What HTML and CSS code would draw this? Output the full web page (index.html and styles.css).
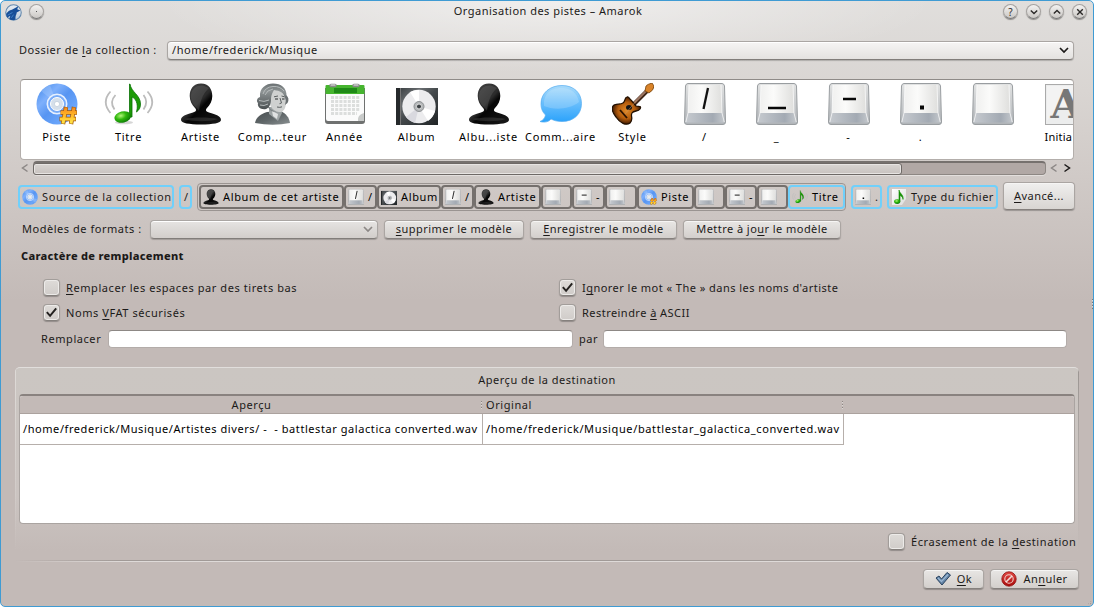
FILE: index.html
```html
<!DOCTYPE html>
<html lang="fr">
<head>
<meta charset="utf-8">
<title>Organisation des pistes – Amarok</title>
<link rel="stylesheet" href="styles.css">
</head>
<body>
<svg class="defs" width="0" height="0" aria-hidden="true">
  <defs>
    <linearGradient id="gDisc" x1="0" y1="0" x2="1" y2="1"><stop offset="0" stop-color="#3f86e8"/><stop offset=".3" stop-color="#7eb0fc"/><stop offset=".5" stop-color="#5795f2"/><stop offset=".75" stop-color="#6aa5fa"/><stop offset="1" stop-color="#4a88e6"/></linearGradient>
    <linearGradient id="gGold" x1="0" y1="0" x2="0" y2="1"><stop offset="0" stop-color="#f58a1c"/><stop offset=".5" stop-color="#ffb928"/><stop offset="1" stop-color="#ffe84a"/></linearGradient>
    <linearGradient id="gBlack" x1="0" y1="0" x2="1" y2="1"><stop offset="0" stop-color="#484848"/><stop offset=".45" stop-color="#2b2b2b"/><stop offset=".55" stop-color="#050505"/><stop offset="1" stop-color="#1a1a1a"/></linearGradient>
    <linearGradient id="gKeySide" x1="0" y1="0" x2="0" y2="1"><stop offset="0" stop-color="#e2e3e3"/><stop offset="1" stop-color="#b0b4b8"/></linearGradient>
    <linearGradient id="gKeyTop" x1="0" y1="0" x2="1" y2="0"><stop offset="0" stop-color="#f0f0ef"/><stop offset=".4" stop-color="#fbfbfa"/><stop offset="1" stop-color="#dfdfdd"/></linearGradient>
    <linearGradient id="gKeyFront" x1="0" y1="0" x2="1" y2="0"><stop offset="0" stop-color="#c6cacf"/><stop offset=".7" stop-color="#a3aab3"/><stop offset="1" stop-color="#c4c8cc"/></linearGradient>
    <linearGradient id="gBubble" x1="0" y1="0" x2="0" y2="1"><stop offset="0" stop-color="#a9dbfb"/><stop offset=".5" stop-color="#67bdfc"/><stop offset="1" stop-color="#2aa2fb"/></linearGradient>
    <radialGradient id="gNote" cx=".4" cy=".35" r=".7"><stop offset="0" stop-color="#b4f57c"/><stop offset=".45" stop-color="#2fb80c"/><stop offset="1" stop-color="#087404"/></radialGradient>
    <linearGradient id="gCase" x1="0" y1="0" x2="1" y2="1"><stop offset="0" stop-color="#33383b"/><stop offset=".3" stop-color="#696d70"/><stop offset=".5" stop-color="#44494c"/><stop offset="1" stop-color="#202426"/></linearGradient>
    <radialGradient id="gWood"><stop offset="0" stop-color="#e08a28"/><stop offset=".6" stop-color="#b45c0c"/><stop offset="1" stop-color="#3f1a02"/></radialGradient>
    <linearGradient id="gBust" x1="0" y1="0" x2="1" y2="1"><stop offset="0" stop-color="#484e50"/><stop offset=".5" stop-color="#5f6668"/><stop offset="1" stop-color="#8b9193"/></linearGradient>
    <linearGradient id="gWig" x1="0" y1="0" x2="0" y2="1"><stop offset="0" stop-color="#6a7072"/><stop offset=".3" stop-color="#8e9495"/><stop offset="1" stop-color="#4a5052"/></linearGradient>
    <linearGradient id="gPage" x1="0" y1="0" x2="1" y2="1"><stop offset="0" stop-color="#fff"/><stop offset="1" stop-color="#dcdcdc"/></linearGradient>
    <linearGradient id="gRed" x1="0" y1="0" x2="0" y2="1"><stop offset="0" stop-color="#e24a44"/><stop offset="1" stop-color="#a80c0c"/></linearGradient>
    <linearGradient id="gWolf" x1="0" y1="0" x2="0" y2="1"><stop offset="0" stop-color="#e9eef3"/><stop offset="1" stop-color="#b9cbdd"/></linearGradient>

    <symbol id="disc" viewBox="0 0 42 42">
      <circle cx="21" cy="21" r="20.5" fill="url(#gDisc)"/>
      <path d="M21 21 5 8A20.500 20.500 0 0 1 14 2Z" fill="#b8d6ff" opacity=".3"/>
      <path d="M21 21 40 27A20.500 20.500 0 0 1 34 37Z" fill="#b8d6ff" opacity=".3"/>
      <circle cx="21" cy="21" r="9.700" fill="#79acf8" stroke="#e6f0ff" stroke-width="1.600"/>
      <circle cx="21" cy="21" r="6.500" fill="#d5dfea" stroke="#fff"/>
      <circle cx="21" cy="21" r="2.600" fill="#fff" stroke="#b7c5d4" stroke-width=".6"/>
    </symbol>
    <symbol id="track" viewBox="0 0 42 42">
      <use href="#disc" width="42" height="42"/>
      <path d="M30 24 27 41M38 24 35 41M24.500 29.500H41M23.500 36H40" fill="none" stroke="#a75a08" stroke-width="4.400"/>
      <path d="M30 24.500 27 40.500M38 24.500 35 40.500M25 29.500H40.500M24 36H39.500" fill="none" stroke="url(#gGold)" stroke-width="3"/>
    </symbol>
    <symbol id="note" viewBox="0 0 50 42">
      <ellipse cx="20" cy="39.500" rx="9" ry="1.800" fill="#bbb" opacity=".6"/>
      <path d="M26 1C27 9 36.500 12 36.500 21C36.500 25 35 27 32.500 29C35 20 31 15 28 14V34H25.500V1Z" fill="#1c9a06" stroke="#087004" stroke-width=".8"/>
      <ellipse cx="18.800" cy="34" rx="8.500" ry="5.600" transform="rotate(-14 18.800 34)" fill="url(#gNote)"/>
      <g fill="none" stroke="#bcbcbc" stroke-width="1.800"><path d="M6.500 8.500Q-3 19 6.500 30"/><path d="M11.500 12Q5 19 10.500 26.500"/><path d="M43.500 8.500Q53 19 43.500 30"/><path d="M39.500 12Q45 19 39.500 26.500"/></g>
    </symbol>
    <symbol id="person" viewBox="0 0 42 42">
      <path d="M21 .5C29 .5 32.300 6.500 32.300 13C32.300 18 30 22 27 25C25 27 26 28.500 29 29.500C36 31.500 41 33 41 37C41 40 33 41.500 21 41.500S1 40 1 37C1 33 6 31.500 13 29.500C16 28.500 17 27 15 25C12 22 9.700 18 9.700 13C9.700 6.500 13 .5 21 .5Z" fill="url(#gBlack)"/>
      <path d="M11 12C12 5 17 2 23 2.500L29 5C22 11 20 20 19 28C17 24 10 21 11 12Z" fill="#777" opacity=".28"/>
      <path d="M4 36C14 34 28 34 38 36C30 39 12 39 4 36Z" fill="#777" opacity=".25"/>
    </symbol>
    <symbol id="composer" viewBox="0 0 42 42">
      <path d="M3 40C4 34 9 31 15 29L29 28C34 31 37 34 38 40Q21 43.500 3 40Z" fill="url(#gBust)"/>
      <path d="M17 24H29L30 30 26 38 17 31Z" fill="#9da3a4"/>
      <path d="M20 28 26 31 25 36 21 33Z" fill="#e0e2e2"/>
      <path d="M16 9C19 5 31 5 33 12L34 19C34 26 31 29.500 27 29C20 28 16 22 16 9Z" fill="#cfd1d0"/>
      <path d="M16 9V20Q17 28 26 29.500L19 28 14 22Z" fill="#7e8486"/>
      <path d="M14 26C9 27 5 24 6 20C4 18 5 15 8 14C7 5 14 .5 21 .5C29 .5 35 5 34.500 13L33 16C32 9 28 8 22 7C20 11 19 12 19 17C19 21 17 25 14 26Z" fill="url(#gWig)"/>
      <path d="M11 11Q13 4 21 3.500Q28 3 32 8M13 12Q15 7 21 6M7 17.500Q12 19.500 17 17M8 22Q12 23.500 16 21" fill="none" stroke="#b5babb" stroke-width="1"/>
      <path d="M22 13.800 26 13M29.500 13 32.500 13.800M28 15 29.500 20 27.500 20.700M25 24Q28 24.800 30 23.800" fill="none" stroke="#5b6061" stroke-width="1"/>
      <path d="M23 16H26M30 16H32.500" stroke="#2b2e2f" stroke-width="1.200"/>
      <path d="M34 12Q38 15 35.500 20L33 22Q34.500 18 33 14Z" fill="#6a7072"/>
    </symbol>
    <symbol id="calendar" viewBox="0 0 42 42">
      <path d="M1 5H41V38Q41 41 38 41H4Q1 41 1 38Z" fill="#6f7170"/>
      <path d="M2 10H40V31L34 38H4Q2 38 2 36Z" fill="#fbfbfb"/>
      <path d="M34 38Q33 32 40 30V38Z" fill="#c9cbca"/>
      <path d="M1.500 3Q1.500 2 2.500 2H39.500Q40.500 2 40.500 3V11H1.500Z" fill="#46b52f"/><path d="M10 5H33V10H10Z" fill="#1f8a17"/>
      <path d="M7 14.500H36M7 18.500H36M7 22.500H36M7 26.500H36M7 30.500H33" stroke="#dcdedd" stroke-width="3" stroke-dasharray="3 1.200"/>
      <path d="M7 2.500H11M30 2.500H34" stroke="#888" stroke-width="3.500" stroke-linecap="round"/><path d="M7 2H11M30 2H34" stroke="#eee" stroke-linecap="round"/>
    </symbol>
    <symbol id="album" viewBox="0 0 42 42">
      <rect y="5" width="42" height="37" fill="url(#gCase)"/>
      <path d="M0 5H4V42H0Z" fill="#25292b"/><path d="M4.500 5V42" stroke="#777"/>
      <circle cx="23" cy="23.500" r="16.700" fill="#ececee"/>
      <path d="M23 23.500 14 9A17 17 0 0 1 23 7Z" fill="#fff"/><path d="M23 23.500 32 38A17 17 0 0 0 39 28Z" fill="#fff"/><path d="M23 23.500 10 34A17 17 0 0 0 19 40Z" fill="#d9d9df"/>
      <circle cx="23" cy="23.500" r="5" fill="#b5b8ba" stroke="#8d9092"/><circle cx="23" cy="23.500" r="2.500" fill="#3e4346" stroke="#ddd"/>
    </symbol>
    <symbol id="comment" viewBox="0 0 42 42">
      <path d="M22 2.500C34 2.500 41.500 10 41.500 20.500S34 38.500 22 38.500C17 38.500 14 37.500 11 36C9 38.500 5 40 0 38.500C3 37.500 5 35 5.500 32C2 28.500 1 25 1 20.500C1 10 10 2.500 22 2.500Z" fill="url(#gBubble)" stroke="#55acf0" stroke-width=".7"/>
      <path d="M4 18C6 8 13 5 21 5C30 5 37 9 39 19C29 27 13 27 4 23Z" fill="#fff" opacity=".18"/>
    </symbol>
    <symbol id="guitar" viewBox="0 0 42 42">
      <path d="M17 26 35 8" stroke="#3d2415" stroke-width="4"/><path d="M17 25 35 7" stroke="#9c7562" stroke-width="2.200"/>
      <path d="M33 8 34 3Q36 1 40 0L42 3Q42 7 37 10Z" fill="#d98329" stroke="#74420d" stroke-width=".8"/>
      <path d="M1 23C3 20 8 22 11 20C14 18 12 15 15 14C17 13 17 16 19 17L24 23C26 24 30 22 28 26C26 29 22 27 20 30C18 33 22 36 18 40C14 43 8 40 4 34C1 30 -1 26 1 23Z" fill="url(#gWood)" stroke="#221001" stroke-width="1.300"/>
      <ellipse cx="17" cy="24.500" rx="3" ry="2.500" fill="#151515"/><path d="M8 27 15 35" stroke="#2b1200" stroke-width="1.800"/><path d="M13 31 25 17" stroke="#c29060" stroke-width=".6"/>
    </symbol>
    <symbol id="key" viewBox="0 0 42 42">
      <path d="M4 .5H38Q40 .5 40.500 3L41.500 39Q41.500 41.500 39 41.500H3Q.5 41.500 .5 39L1.500 3Q2 .5 4 .5Z" fill="url(#gKeySide)" stroke="#999da0"/>
      <path d="M5 2H37L38 30H4Z" fill="url(#gKeyTop)"/>
      <path d="M4 30H38L40.500 39.500H1.500Z" fill="url(#gKeyFront)"/>
      <path d="M5 2 4 30 1.800 39M37 2 38 30 40.300 39" fill="none" stroke="#fff" stroke-width=".9" opacity=".8"/>
    </symbol>
    <symbol id="key-slash" viewBox="0 0 42 42"><use href="#key" width="42" height="42"/><path d="M24 5 19.500 26" stroke="#111" stroke-width="2.300"/></symbol>
    <symbol id="key-under" viewBox="0 0 42 42"><use href="#key" width="42" height="42"/><path d="M12 25H30" stroke="#080808" stroke-width="2.400"/></symbol>
    <symbol id="key-dash" viewBox="0 0 42 42"><use href="#key" width="42" height="42"/><path d="M15 16H28" stroke="#080808" stroke-width="2.400"/></symbol>
    <symbol id="key-dot" viewBox="0 0 42 42"><use href="#key" width="42" height="42"/><path d="M20 24.500H24" stroke="#080808" stroke-width="4"/></symbol>
    <symbol id="initial" viewBox="0 0 42 42">
      <rect x=".5" y="1.500" width="41" height="40" fill="#eceded" stroke="#aaa"/><path d="M2 3H40V30Q20 14 2 38Z" fill="#fafafa" opacity=".5"/>
      <text x="21" y="34.500" text-anchor="middle" class="initial-letter">A</text>
    </symbol>
    <symbol id="file" viewBox="0 0 16 16">
      <path d="M1 0H15V10L11 16H1Z" fill="url(#gPage)"/><path d="M8 1C9 5 13 6 12 10.500C12 8 10 7 9 6.500V12.500H8Z" fill="#159005" stroke="#159005" stroke-width=".6"/><ellipse cx="6.200" cy="12.600" rx="3.100" ry="2.300" fill="url(#gNote)"/>
    </symbol>
    <symbol id="chev-down" viewBox="0 0 10 10"><path d="M1 3 5 7 9 3" fill="none" stroke="currentColor" stroke-width="1.700"/></symbol>
    <symbol id="chev-left" viewBox="0 0 10 10"><path d="M7.500 1.500 2.500 5 7.500 8.500" fill="none" stroke="currentColor" stroke-width="1.500"/></symbol>
    <symbol id="tick" viewBox="0 0 16 16"><path d="M3 7.500 6.500 11.500 13 3.500" fill="none" stroke="#23211f" stroke-width="2.100"/></symbol>
  </defs>
</svg>

<div class="window">
  <header class="titlebar">
    <svg class="app-icon" viewBox="0 0 16 16"><circle cx="8" cy="8" r="7.300" fill="url(#gWolf)" stroke="#6287ad" stroke-width="1"/><path d="M1 9.500C3 7 4 6 6.500 5.500L12.500 2 11.500 5 14.500 6 11 8C11 10 9.500 11 10 14.500Q7 16 4 14L5 11 2 13Z" fill="#174f99"/><path d="M2.500 10.500 7 8M6 13 8 10" fill="none" stroke="#4688cc" stroke-width=".8"/></svg>
    <span class="round-btn pin"><i></i></span>
    <h1 class="title">Organisation des pistes – Amarok</h1>
    <div class="win-buttons">
      <span class="round-btn"><span class="help-mark">?</span></span>
      <span class="round-btn"><svg viewBox="0 0 10 10"><use href="#chev-down"/></svg></span>
      <span class="round-btn"><svg class="flip" viewBox="0 0 10 10"><use href="#chev-down"/></svg></span>
      <span class="round-btn"><svg viewBox="0 0 10 10"><path d="M1.500 1.500 8.500 8.500M8.500 1.500 1.500 8.500" stroke="currentColor" stroke-width="1.700"/></svg></span>
    </div>
  </header>

  <div class="collection-row">
    <label class="collection-label">Dossier de <u>l</u>a collection :</label>
    <div class="combo collection-combo"><span>/home/frederick/Musique</span><svg class="chev"><use href="#chev-down"/></svg></div>
  </div>

  <div class="palette">
    <div class="item"><svg class="pic"><use href="#track"/></svg><span>Piste</span></div>
    <div class="item"><svg class="pic wide"><use href="#note"/></svg><span>Titre</span></div>
    <div class="item"><svg class="pic"><use href="#person"/></svg><span>Artiste</span></div>
    <div class="item"><svg class="pic"><use href="#composer"/></svg><span>Comp...teur</span></div>
    <div class="item"><svg class="pic"><use href="#calendar"/></svg><span>Année</span></div>
    <div class="item"><svg class="pic"><use href="#album"/></svg><span>Album</span></div>
    <div class="item"><svg class="pic"><use href="#person"/></svg><span>Albu...iste</span></div>
    <div class="item"><svg class="pic"><use href="#comment"/></svg><span>Comm...aire</span></div>
    <div class="item"><svg class="pic"><use href="#guitar"/></svg><span>Style</span></div>
    <div class="item"><svg class="pic"><use href="#key-slash"/></svg><span>/</span></div>
    <div class="item"><svg class="pic"><use href="#key-under"/></svg><span>_</span></div>
    <div class="item"><svg class="pic"><use href="#key-dash"/></svg><span>-</span></div>
    <div class="item"><svg class="pic"><use href="#key-dot"/></svg><span>.</span></div>
    <div class="item"><svg class="pic"><use href="#key"/></svg><span></span></div>
    <div class="item last"><svg class="pic"><use href="#initial"/></svg><span>Initia</span></div>
  </div>

  <div class="scrollbar">
    <svg class="arrow dim"><use href="#chev-left"/></svg>
    <div class="groove"><div class="thumb"></div></div>
    <svg class="arrow dim"><use href="#chev-left"/></svg>
    <svg class="arrow mirror"><use href="#chev-left"/></svg>
  </div>

  <div class="scheme">
    <div class="token blue"><svg><use href="#disc"/></svg><span>Source de la collection</span></div>
    <div class="token blue slash"><span>/</span></div>
    <div class="token-bar">
      <div class="token"><svg><use href="#person"/></svg><span>Album de cet artiste</span></div>
      <div class="token"><svg><use href="#key-slash"/></svg><span>/</span></div>
      <div class="token"><svg><use href="#album"/></svg><span>Album</span></div>
      <div class="token"><svg><use href="#key-slash"/></svg><span>/</span></div>
      <div class="token"><svg><use href="#person"/></svg><span>Artiste</span></div>
      <div class="token"><svg><use href="#key"/></svg></div>
      <div class="token"><svg><use href="#key-dash"/></svg><span>-</span></div>
      <div class="token"><svg><use href="#key"/></svg></div>
      <div class="token"><svg><use href="#track"/></svg><span>Piste</span></div>
      <div class="token"><svg><use href="#key"/></svg></div>
      <div class="token"><svg><use href="#key-dash"/></svg><span>-</span></div>
      <div class="token"><svg><use href="#key"/></svg></div>
      <div class="token blue"><svg><use href="#note"/></svg><span>Titre</span></div>
    </div>
    <div class="token blue"><svg><use href="#key-dot"/></svg><span>.</span></div>
    <div class="token blue"><svg><use href="#file"/></svg><span class="file-type">Type du fichier</span></div>
    <button class="btn advanced"><span><u>A</u>vancé...</span></button>
  </div>

  <div class="presets">
    <label>Modèles de formats :</label>
    <div class="combo"><svg class="chev dim"><use href="#chev-down"/></svg></div>
    <button class="btn"><span><u>s</u>upprimer le modèle</span></button>
    <button class="btn"><span><u>E</u>nregistrer le modèle</span></button>
    <button class="btn"><span>Mettre à jo<u>u</u>r le modèle</span></button>
  </div>

  <h2 class="section">Caractère de remplacement</h2>
  <div class="options">
    <label class="option"><span class="check"></span><span><u>R</u>emplacer les espaces par des tirets bas</span></label>
    <label class="option"><span class="check"><svg><use href="#tick"/></svg></span><span class="ignore">I<u>g</u>norer le mot « The » dans les noms d'artiste</span></label>
    <label class="option"><span class="check"><svg><use href="#tick"/></svg></span><span>Noms <u>V</u>FAT sécurisés</span></label>
    <label class="option"><span class="check"></span><span class="ignore">Restreindre <u>à</u> ASCII</span></label>
  </div>
  <div class="replace-row">
    <label>Remplacer</label><div class="field"></div><label>par</label><div class="field"></div>
  </div>

  <section class="preview">
    <h3>Aperçu de la destination</h3>
    <div class="table">
      <div class="thead"><span class="th center">Aperçu</span><span class="th">Original</span><span></span></div>
      <div class="trow"><span class="td">/home/frederick/Musique/Artistes divers/ -&nbsp; - battlestar galactica converted.wav</span><span class="td second">/home/frederick/Musique/battlestar_galactica_converted.wav</span></div>
    </div>
    <label class="option overwrite"><span class="check"></span><span>Écrasement de la <u>d</u>estination</span></label>
  </section>
  <div class="rule"></div>
  <footer class="actions">
    <button class="btn ok"><svg viewBox="0 0 16 16"><path d="M1 7 4 5 6.500 8 12 1.500 15.500 4 7 14Z" fill="#6586a8" stroke="#29425f"/><path d="M3 7 6.500 10.500 13 3.500" fill="none" stroke="#9cb8d4" stroke-width="1.200"/></svg><span><u>O</u>k</span></button>
    <button class="btn cancel"><svg viewBox="0 0 16 16"><circle cx="8" cy="8" r="7.200" fill="url(#gRed)" stroke="#920d0d" stroke-width=".8"/><circle cx="8" cy="8" r="4.200" fill="none" stroke="#f0cfcb" stroke-width="1.100"/><path d="M5 11 11 5" stroke="#f4dcd8" stroke-width="1.600"/></svg><span>An<u>n</u>uler</span></button>
  </footer>
  <span class="grip edge"></span>
  <span class="grip corner"></span>
</div>
</body>
</html>
```
FILE: styles.css
```css
* { box-sizing: border-box; }
html, body { margin: 0; width: 1094px; height: 607px; overflow: hidden; background: #fff; }
body, button { font: 11px/14px "Noto Sans", "Open Sans", sans-serif; color: #1c1a19; letter-spacing: .57px; }
h1, h2, h3 { margin: 0; font-size: 11px; line-height: 14px; font-weight: 400; }
u { text-decoration: underline; text-decoration-thickness: 1px; text-underline-offset: 2px; text-decoration-skip-ink: none; }
.defs { position: absolute; }
.initial-letter { font: bold 40px "DejaVu Serif", serif; fill: #777; letter-spacing: 0; }

.window {
  position: relative; width: 1094px; height: 607px; overflow: hidden;
  display: flex; flex-direction: column;
  border: 1px solid #3f9bd3; border-radius: 5px;
  background:
    radial-gradient(ellipse 390px 72px at 546px 0, rgba(255,255,255,.5), rgba(255,255,255,0)),
    linear-gradient(#e0dedc 0, #d9d5d2 90px, #c3bab7 300px);
}

.titlebar { height: 24px; flex: none; display: flex; align-items: flex-start; padding: 3px 6px 0 4px; }
.app-icon { width: 17px; height: 17px; }
.round-btn {
  width: 15px; height: 15px; border-radius: 50%; flex: none;
  display: flex; align-items: center; justify-content: center;
  background: linear-gradient(#f3f2f1, #cbc8c5); border: 1px solid #a5a2a0; border-bottom-color: #777;
  box-shadow: 0 1px 1px #8f8c8a; color: #2b2928;
}
.round-btn svg { width: 8px; height: 8px; }
.round-btn i { width: 1px; height: 1px; background: #555; }
.pin { margin-left: 7px; }
.flip { transform: scaleY(-1); }
.help-mark { font-size: 10px; line-height: 10px; letter-spacing: 0; }
.title { flex: 1; text-align: center; padding-left: 49px; letter-spacing: .48px; }
.win-buttons { display: flex; gap: 8px; }

.collection-row { display: grid; grid-template-columns: 148px 907px; height: 20px; margin: 15px 0 0 18px; align-items: center; flex: none; }
.collection-label { letter-spacing: .51px; }
.combo {
  display: flex; align-items: center; justify-content: space-between; height: 19px; padding: 0 4px;
  border: 1px solid #aaa6a3; border-bottom-color: #817d7a; border-radius: 4px;
  background: linear-gradient(#f6f5f4, #e4e2e0); box-shadow: 0 1px 1px rgba(0,0,0,.2), inset 0 1px #fff;
}
.chev { width: 10px; height: 10px; }
.dim { color: #8c8886; }

.palette {
  height: 81px; width: 1054px; flex: none; margin: 19px 0 0 19px; display: flex; overflow: hidden; padding-top: 3px;
  background: #fff; border: 1px solid #b3aeab; border-top-color: #8f8b88; border-radius: 4px;
}
.item { width: 72px; flex: none; display: flex; flex-direction: column; align-items: center; gap: 5px; color: #000; letter-spacing: .75px; margin-left: -.5px; margin-right: .5px; }
.last { align-items: flex-start; width: 44px; padding-left: 16px; letter-spacing: .2px; }
.pic { width: 42px; height: 42px; flex: none; }
.wide { width: 50px; }
.item span { white-space: nowrap; }

.scrollbar { display: flex; align-items: center; height: 15px; flex: none; margin: 0 0 0 19px; }
.arrow { width: 10px; height: 10px; flex: none; margin-right: 3px; }
.arrow ~ .arrow { margin: 0 0 0 3px; }
.mirror { transform: scaleX(-1); }
.groove { width: 1013px; height: 14px; background: #b1a8a5; border: 1px solid #8d8783; border-top: 2px solid #76716e; border-radius: 4px; box-shadow: 0 1px #e3dfdd; }
.thumb { width: 869px; height: 12px; margin: 0 0 0 -1px; border: 1px solid #6e6966; border-radius: 3px; background: linear-gradient(#d8d4d1, #c8c2bf); box-shadow: inset 0 0 0 1px #e7e4e2; }

.scheme { display: grid; grid-template-columns: 156px 13px 649px 31px 111px 72px; column-gap: 5px; margin: 7px 0 0 17px; height: 29px; align-items: center; flex: none; }
.token { height: 24px; display: flex; align-items: center; gap: 4px; border: 2px solid #75706d; border-radius: 4px; padding-left: 2px; color: #000; white-space: nowrap; overflow: hidden; letter-spacing: .63px; }
.token svg { width: 16px; height: 16px; flex: none; }
.blue { border-color: #70d0fb; color: #1c1a19; }
.file-type { letter-spacing: .45px; }
.token-bar .blue { color: #000; }
.slash { padding-left: 3px; }
.token-bar { height: 28px; padding: 1px; border: 1px solid #9a9491; border-radius: 4px; display: grid; align-items: center; grid-template-columns: 145px 33px 64px 33px 67px 31px 33px 32px 57px 31px 32px 31px 57px; }
.btn {
  display: flex; align-items: center; justify-content: center; gap: 6px; height: 19px; padding: 0; white-space: nowrap;
  border: 1px solid #aaa5a2; border-bottom-color: #85807d; border-radius: 4px; letter-spacing: .45px;
  background: linear-gradient(#e8e6e4, #d3cfcc); box-shadow: 0 1px 1px rgba(0,0,0,.25), inset 0 1px #f6f5f4;
}
.advanced { height: 28px; margin-top: -1px; background: linear-gradient(#f0efee, #d8d5d2); }

.presets { display: grid; grid-template-columns: 122px 228px 140px 147px 158px; column-gap: 6px; height: 20px; align-items: center; margin: 8px 0 0 21px; flex: none; }
.presets label { letter-spacing: .53px; }
.presets .combo { justify-content: flex-end; background: linear-gradient(#e6e4e2, #d2cecb); }
.section { font-weight: 800; letter-spacing: .3px; margin: 10px 0 0 20px; flex: none; }
.options { display: grid; grid-template-columns: 516px 450px; grid-template-rows: 25px 25px; margin: 12px 0 0 42px; flex: none; }
.option { display: flex; align-items: center; gap: 6px; }
.ignore { letter-spacing: .46px; }
.check { width: 17px; height: 17px; flex: none; border: 1px solid #a29d9a; border-bottom-color: #85807d; border-radius: 4px; background: linear-gradient(#dedbd8, #d0ccc9); box-shadow: 0 1px 1px rgba(0,0,0,.25), inset 0 0 0 1px #edebe9; }
.check svg { width: 15px; height: 15px; display: block; }
.replace-row { display: grid; grid-template-columns: 67px 465px 30px 464px; height: 19px; align-items: center; margin: 4px 0 0 40px; flex: none; }
.replace-row label:nth-child(3) { padding-left: 6px; }
.field { height: 18px; border: 1px solid #b3aca9; border-top-color: #8d8885; border-radius: 4px; background: #fff; }

.preview {
  width: 1064px; height: 184px; margin: 19px 0 0 14px; padding: 5px 4px 0; flex: none;
  border-top: 1px solid #e1dedc; border-radius: 5px 5px 0 0;
  background:
    linear-gradient(#dedad7, rgba(195,186,183,0)) left / 1px 100% no-repeat,
    linear-gradient(#9b9592, rgba(155,149,146,0)) right / 1px 100% no-repeat,
    linear-gradient(#cbc6c2, #cbc4c1 70%, #c3bab7);
}
.preview h3 { text-align: center; letter-spacing: .51px; }
.table { margin-top: 7px; height: 130px; width: 1056px; overflow: hidden; background: #fff; border: 1px solid #aaa4a1; border-top: 2px solid #89827f; border-radius: 4px; }
.thead { height: 18px; display: grid; grid-template-columns: 463px 361px 1fr; align-items: center; background: #c3bab7; border-bottom: 1px solid #aba29e; }
.th { padding: 0 3px; height: 14px; background: repeating-linear-gradient(#8d8683 0 1px, #dcd8d6 1px 2px, transparent 2px 3px) right 1px top 3px / 1px 9px no-repeat; }
.center { text-align: center; }
.trow { display: grid; grid-template-columns: 463px 361px; height: 31px; color: #000; }
.td { border: solid #b6afab; border-width: 0 1px 1px 0; line-height: 29px; padding-left: 3px; white-space: nowrap; overflow: hidden; }
.second { letter-spacing: .63px; }
.overwrite { margin: 9px 0 0 869px; white-space: nowrap; }
.rule { height: 2px; flex: none; margin: 9px 14px 0; background: linear-gradient(90deg, transparent, #a19a97 10%, #a19a97 90%, transparent) top / 100% 1px no-repeat, linear-gradient(90deg, transparent, #dedad8 10%, #dedad8 90%, transparent) bottom / 100% 1px no-repeat; }
.actions { display: grid; grid-template-columns: 61px 89px; gap: 6px; justify-content: end; margin: 7px 14px 0 0; flex: none; }
.actions .btn { height: 20px; }
.actions svg { width: 16px; height: 16px; }
.grip { position: absolute; }
.edge { right: 0; top: 298px; width: 1px; height: 10px; background: repeating-linear-gradient(#807a77 0 1px, #ddd 1px 2px, transparent 2px 3px); }
.corner { right: 1px; bottom: 1px; width: 5px; height: 5px; background: radial-gradient(#807a77 35%, transparent 40%) 0 0 / 2.5px 2.5px; clip-path: polygon(100% 0, 100% 100%, 0 100%); }
```
